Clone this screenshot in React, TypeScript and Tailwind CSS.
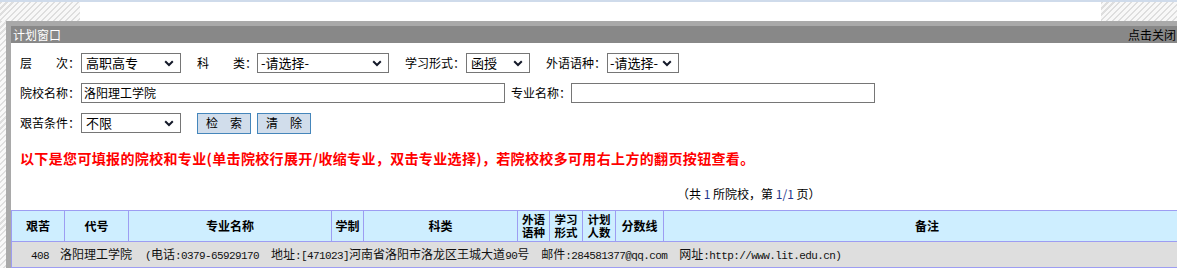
import React from "react";

const hatch =
  "bg-[repeating-linear-gradient(135deg,#dedede_0px,#dedede_1.5px,#f8f8f8_1.5px,#f8f8f8_4.2px)]";

function Chevron() {
  return (
    <svg width="10" height="7" viewBox="0 0 10 7" className="shrink-0">
      <path d="M1.2 1.3 L5 5 L8.8 1.3" fill="none" stroke="#151a2a" strokeWidth="2" />
    </svg>
  );
}

function Sel({ className, text, pl = "pl-[4px]" }: { className: string; text: string; pl?: string }) {
  return (
    <div
      className={`h-[20px] shrink-0 border border-[#767676] bg-white flex items-center justify-between ${pl} pr-[6px] text-[13px] leading-[16px] ${className}`}
    >
      <span className="whitespace-nowrap">{text}</span>
      <Chevron />
    </div>
  );
}

function M({ children }: { children: React.ReactNode }) {
  return <span className="font-['Liberation_Mono',monospace] text-[11px] tracking-[-0.6px]">{children}</span>;
}

function Label({ children, className = "" }: { children: React.ReactNode; className?: string }) {
  return <span className={`w-[60px] shrink-0 whitespace-pre leading-[14px] ${className}`}>{children}</span>;
}

function Btn({ children, className = "" }: { children: React.ReactNode; className?: string }) {
  return (
    <div
      className={`w-[54px] h-[21px] bg-[#d1ddeb] border border-[#4586bb] flex items-center justify-center whitespace-pre leading-[14px] ${className}`}
    >
      {children}
    </div>
  );
}

function Two({ a, b }: { a: string; b: string }) {
  return (
    <div className="flex flex-col items-center leading-[13px] text-[11.5px]">
      <span>{a}</span>
      <span>{b}</span>
    </div>
  );
}

export default function App() {
  return (
    <div className="w-[1177px] h-[268px] overflow-hidden bg-white font-['Noto_Sans_CJK_SC',sans-serif] text-[12px] text-black">
      <div className="h-[21px] border-t-2 border-[#cfdbeb] flex">
        <div className={`w-[80px] ${hatch}`} />
        <div className="flex-1 bg-white" />
        <div className={`w-[76px] ${hatch}`} />
      </div>
      <div className="flex h-[247px]">
        <div className={`w-[6px] shrink-0 ${hatch}`} />
        <div className="flex-1 min-w-0 overflow-hidden border-l-[5px] border-t-[5px] border-[#a9a9a9] flex flex-col bg-white">
          <div className="h-[17px] shrink-0 bg-[#888888] flex items-center justify-between pl-[2px] leading-[14px]">
            <span className="text-white">计划窗口</span>
            <span className="text-black pr-[1px]">点击关闭</span>
          </div>
          <div className="pt-[5px] pl-[9px] flex flex-col">
            <div className="h-[30px] flex items-center">
              <Label>{"层\u3000\u3000次："}</Label>
              <Sel className="ml-[1px] w-[100px]" text="高职高专" />
              <Label className="ml-[16px]">{"科\u3000\u3000类："}</Label>
              <Sel className="w-[132px]" text="-请选择-" pl="pl-[3px]" />
              <Label className="ml-[16px]">学习形式：</Label>
              <Sel className="ml-[1px] w-[64px]" text="函授" />
              <Label className="ml-[16px]">外语语种：</Label>
              <Sel className="ml-[1px] w-[72px]" text="-请选择-" pl="pl-[2px]" />
            </div>
            <div className="h-[30px] flex items-center">
              <Label>院校名称：</Label>
              <div className="ml-[1px] w-[424px] h-[20px] border border-[#767676] flex items-center pl-[2px] leading-[14px]">
                洛阳理工学院
              </div>
              <Label className="ml-[6px]">专业名称：</Label>
              <div className="w-[304px] h-[20px] border border-[#767676]" />
            </div>
            <div className="h-[30px] flex items-center">
              <Label>艰苦条件：</Label>
              <Sel className="ml-[1px] w-[100px]" text="不限" />
              <Btn className="ml-[16px]">{"检\u3000索"}</Btn>
              <Btn className="ml-[6px]">{"清\u3000除"}</Btn>
            </div>
            <div className="h-[40px] flex items-center text-[14px] font-bold text-[#ff0000] leading-[16px] tracking-[0.35px] whitespace-nowrap">
              以下是您可填报的院校和专业(单击院校行展开/收缩专业，双击专业选择)，若院校校多可用右上方的翻页按钮查看。
            </div>
          </div>
          <div className="h-[32px] flex items-center pl-[666px] leading-[14px] whitespace-pre">
            （共 <span className="text-[#24368c]">1</span> 所院校，第 <span className="text-[#24368c]">1/1</span> 页）
          </div>
          <table className="table-fixed border-collapse w-[1180px] shrink-0">
            <colgroup>
              <col className="w-[53px]" />
              <col className="w-[64px]" />
              <col className="w-[203px]" />
              <col className="w-[32px]" />
              <col className="w-[154px]" />
              <col className="w-[32px]" />
              <col className="w-[33px]" />
              <col className="w-[33px]" />
              <col className="w-[48px]" />
              <col />
            </colgroup>
            <thead>
              <tr className="h-[31px] bg-[#ceeeff] font-bold leading-[14px]">
                <th className="border border-[#9d9df2] p-0">艰苦</th>
                <th className="border border-[#9d9df2] p-0">代号</th>
                <th className="border border-[#9d9df2] p-0">专业名称</th>
                <th className="border border-[#9d9df2] p-0">学制</th>
                <th className="border border-[#9d9df2] p-0">科类</th>
                <th className="border border-[#9d9df2] p-0">
                  <Two a="外语" b="语种" />
                </th>
                <th className="border border-[#9d9df2] p-0">
                  <Two a="学习" b="形式" />
                </th>
                <th className="border border-[#9d9df2] p-0">
                  <Two a="计划" b="人数" />
                </th>
                <th className="border border-[#9d9df2] p-0">分数线</th>
                <th className="border border-[#9d9df2] p-0">备注</th>
              </tr>
            </thead>
            <tbody>
              <tr className="h-[26px] bg-[#dedede]">
                <td colSpan={10} className="border border-[#9d9df2] p-0 pl-[19px] whitespace-nowrap leading-[14px] text-[#111]">
                  <M>408</M>
                  <span className="ml-[11px]">洛阳理工学院</span>
                  <span className="ml-[13px]">
                    <M>(</M>电话<M>:0379-65929170</M>
                  </span>
                  <span className="ml-[12px]">
                    地址<M>:[471023]</M>河南省洛阳市洛龙区王城大道<M>90</M>号
                  </span>
                  <span className="ml-[12px]">
                    邮件<M>:284581377@qq.com</M>
                  </span>
                  <span className="ml-[12px]">
                    网址<M>:http://www.lit.edu.cn)</M>
                  </span>
                </td>
              </tr>
            </tbody>
          </table>
        </div>
      </div>
    </div>
  );
}
